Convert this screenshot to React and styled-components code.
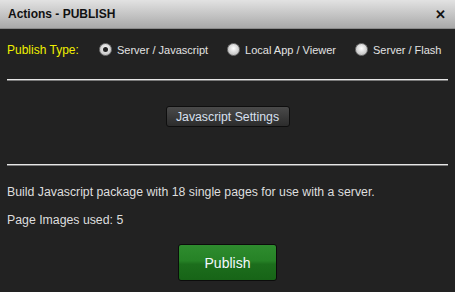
import React from "react";
import styled, { createGlobalStyle } from "styled-components";

const Global = createGlobalStyle`
  html, body { margin: 0; padding: 0; background: #222; }
  body { font-family: Arial, "Liberation Sans", sans-serif; }
`;

const Dialog = styled.div`
  width: 455px;
  height: 292px;
  background: #222222;
  display: flex;
  flex-direction: column;
  overflow: hidden;
`;

const TitleBar = styled.div`
  height: 29px;
  box-sizing: border-box;
  padding: 0 8px 0 8px;
  display: flex;
  align-items: center;
  justify-content: space-between;
  background: linear-gradient(#e2e2e2, #a9a9a9);
  border-bottom: 1px solid #8a8a8a;
`;

const Title = styled.span`
  font: bold 12px "Liberation Sans", Arial, sans-serif;
  color: #111;
`;

const Close = styled.span`
  font: bold 13px "Liberation Sans", Arial, sans-serif;
  color: #111;
  margin-right: 1px;
`;

const Body = styled.div`
  padding: 12px 7px 0 7px;
  display: flex;
  flex-direction: column;
  color: #dcdcdc;
  font-family: "Liberation Sans", Arial, sans-serif;
`;

const TypeRow = styled.div`
  display: flex;
  align-items: center;
  height: 17px;
`;

const TypeLabel = styled.span`
  color: #f0f000;
  font-size: 12px;
  width: 92px;
`;

const RadioOption = styled.label`
  display: flex;
  align-items: center;
  gap: 5px;
  font-size: 11px;
  color: #e2e2e2;
  margin-right: ${(p) => p.$gap}px;
`;

const RadioDot = styled.span`
  width: 13px;
  height: 13px;
  border-radius: 50%;
  box-sizing: border-box;
  background: radial-gradient(circle at 50% 40%, #ffffff, #c8c8c8 70%, #9a9a9a);
  border: 1px solid #777;
  display: flex;
  align-items: center;
  justify-content: center;
  &::after {
    content: "";
    width: 5px;
    height: 5px;
    border-radius: 50%;
    background: ${(p) => (p.$checked ? "#222" : "transparent")};
  }
`;

const Rule = styled.div`
  height: 2px;
  background: #e6e6e6;
  border-bottom: 1px solid #7a7a7a;
  box-sizing: border-box;
  margin-top: ${(p) => p.$top}px;
`;

const Center = styled.div`
  display: flex;
  justify-content: center;
  margin-top: ${(p) => p.$top}px;
`;

const SmallButton = styled.button`
  width: 124px;
  height: 21px;
  box-sizing: border-box;
  border: 1px solid #0e0e0e;
  border-radius: 3px;
  background: linear-gradient(#4a4a4a, #2c2c2c);
  color: #d8e0f0;
  font: 12.3px "Liberation Sans", Arial, sans-serif;
  padding: 0;
`;

const BigButton = styled.button`
  width: 99px;
  height: 37px;
  box-sizing: border-box;
  border: 1px solid #0c0c0c;
  border-radius: 3px;
  background: linear-gradient(#2e8c2e 0%, #268226 45%, #1c6e1c 55%, #176417 100%);
  color: #f4f8ff;
  font: 14px "Liberation Sans", Arial, sans-serif;
  padding: 0;
`;

const Text = styled.p`
  margin: ${(p) => p.$top}px 0 0 0;
  font-size: 12.3px;
  line-height: 14px;
  color: #dedede;
`;

export default function App() {
  return (
    <>
      <Global />
      <Dialog>
        <TitleBar>
          <Title>Actions - PUBLISH</Title>
          <Close>✕</Close>
        </TitleBar>
        <Body>
          <TypeRow>
            <TypeLabel>Publish Type:</TypeLabel>
            <RadioOption $gap={19}>
              <RadioDot $checked />
              Server / Javascript
            </RadioOption>
            <RadioOption $gap={19}>
              <RadioDot />
              Local App / Viewer
            </RadioOption>
            <RadioOption $gap={0}>
              <RadioDot />
              Server / Flash
            </RadioOption>
          </TypeRow>
          <Rule $top={21} />
          <Center $top={25}>
            <SmallButton>Javascript Settings</SmallButton>
          </Center>
          <Rule $top={37} />
          <Text $top={19}>Build Javascript package with 18 single pages for use with a server.</Text>
          <Text $top={14}>Page Images used: 5</Text>
          <Center $top={17}>
            <BigButton>Publish</BigButton>
          </Center>
        </Body>
      </Dialog>
    </>
  );
}
